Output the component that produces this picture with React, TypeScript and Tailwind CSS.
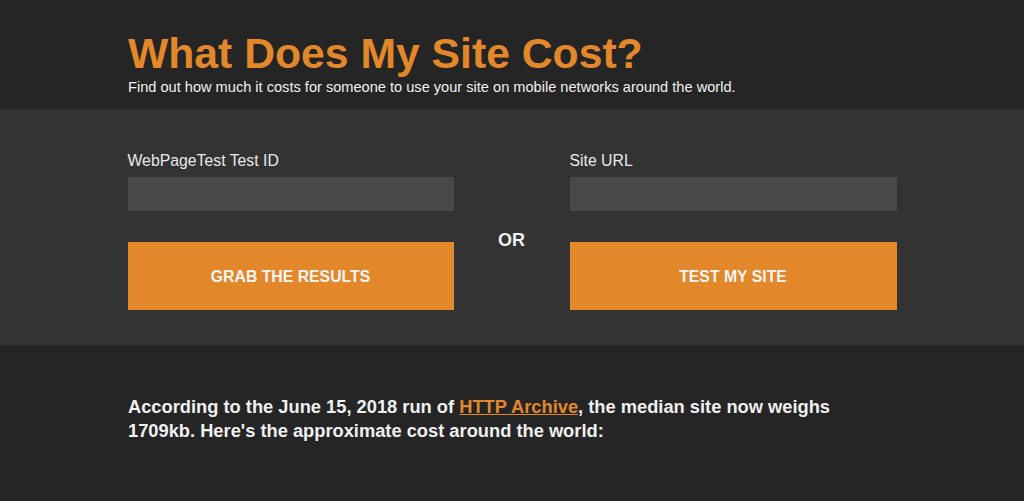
export default function App() {
  return (
    <div className="min-h-[501px] bg-[#252525] font-['Liberation_Sans',Arial,sans-serif] text-[#eeeeee]">
      <header className="pt-[31px] pb-[14px]">
        <div className="mx-auto w-[768px]">
          <h1 className="text-[42.7px] leading-[44px] font-bold text-[#e2882a]">What Does My Site Cost?</h1>
          <p className="mt-[4px] text-[14.6px] leading-4 text-[#f0f0f0]">
            Find out how much it costs for someone to use your site on mobile networks around the world.
          </p>
        </div>
      </header>

      <section className="bg-[#333333] pt-[43px] pb-[35px]">
        <div className="mx-auto grid w-[769px] grid-cols-[326px_1fr_327px]">
          <div>
            <label className="block text-[15.8px] leading-[18px] text-[#e8e8e8]">WebPageTest Test ID</label>
            <input type="text" className="mt-[7px] block h-[34px] w-full bg-[#494949] outline-none" />
            <button className="mt-[31px] block h-[68px] w-full bg-[#e2882a] pt-[2px] text-[15.8px] font-bold text-[#f5f5f5]">
              GRAB THE RESULTS
            </button>
          </div>
          <div className="pt-[79px] text-center text-[18px] leading-[18px] font-bold text-[#f0f0f0]">OR</div>
          <div>
            <label className="block text-[15.8px] leading-[18px] text-[#e8e8e8]">Site URL</label>
            <input type="text" className="mt-[7px] block h-[34px] w-full bg-[#494949] outline-none" />
            <button className="mt-[31px] block h-[68px] w-full bg-[#e2882a] pt-[2px] text-[15.8px] font-bold text-[#f5f5f5]">
              TEST MY SITE
            </button>
          </div>
        </div>
      </section>

      <main className="pt-[50px]">
        <div className="mx-auto w-[768px]">
          <p className="max-w-[730px] text-[18.3px] leading-6 font-bold text-[#f0f0f0]">
            According to the June 15, 2018 run of{" "}
            <a href="#" className="text-[#e2882a] underline">HTTP Archive</a>, the median site now weighs 1709kb.
            Here's the approximate cost around the world:
          </p>
        </div>
      </main>
    </div>
  )
}
